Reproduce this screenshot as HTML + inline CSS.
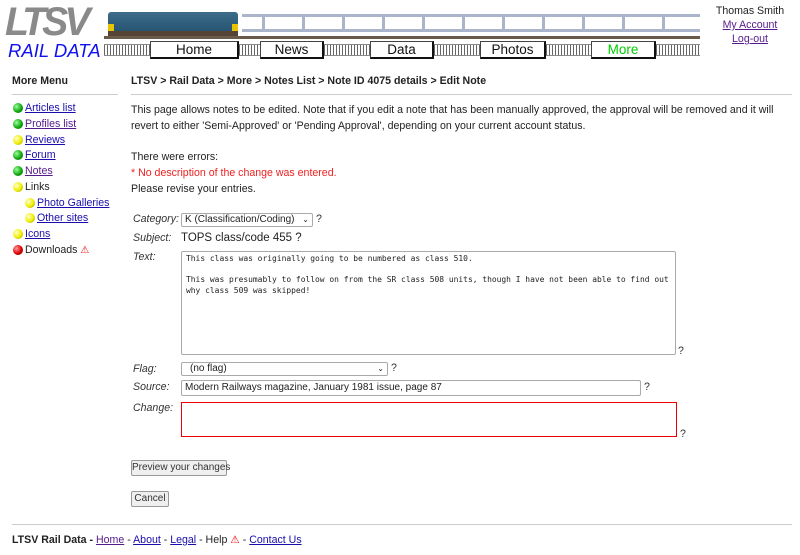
<!DOCTYPE html>
<html><head><meta charset="utf-8"><style>
body{margin:0;width:800px;height:555px;position:relative;font-family:"Liberation Sans",Arial,sans-serif;font-size:10.6px;color:#222;background:#fff;overflow:hidden}
.a{position:absolute;white-space:nowrap}
a{color:#1a0dab;text-decoration:underline}
a.v{color:#551a8b}
.dot{position:absolute;width:10px;height:10px;border-radius:50%;}
.g{background:radial-gradient(circle at 35% 35%,#9f9,#1a1 55%,#050)}
.y{background:radial-gradient(circle at 35% 35%,#ffc,#ee0 55%,#880)}
.r{background:radial-gradient(circle at 35% 35%,#f99,#d00 55%,#600)}
.btn{position:absolute;top:41px;height:15px;background:#fff;border:1px solid #444;border-right:2px solid #111;border-bottom:2px solid #111;font-size:13.5px;text-align:center;line-height:15px;color:#111}
.ties{position:absolute;top:44px;height:10px;background:repeating-linear-gradient(90deg,#666 0 1px,#fff 1px 3px);border-top:1px solid #888;border-bottom:1px solid #888}
.lab{position:absolute;left:133px;font-style:italic;color:#333}
.box{position:absolute;border:1px solid #aaa;border-radius:2px;background:#fff;font-size:10px;line-height:13px;padding-left:3px;box-sizing:border-box;white-space:nowrap}
.q{position:absolute;color:#333}
.bt{position:absolute;background:#efefef;border:1px solid #999;border-radius:2px;font-size:10px;text-align:center;line-height:13px;color:#333;white-space:nowrap}
</style></head><body>
<div class="a" style="left:5px;top:2px;font-size:40px;font-weight:bold;color:#8a8a8a;letter-spacing:-4px;font-style:italic;line-height:40px;transform:scaleX(0.98);transform-origin:left">LTSV</div>
<div class="a" style="left:8px;top:41px;font-size:18.5px;font-style:italic;color:#1111ee;line-height:20px">RAIL DATA</div>
<div class="a" style="left:108px;top:12px;width:130px;height:22px;background:linear-gradient(#3d6d8a,#23506e);border-radius:3px 3px 0 0"></div>
<div class="a" style="left:108px;top:24px;width:6px;height:8px;background:#e8c400"></div>
<div class="a" style="left:232px;top:24px;width:6px;height:8px;background:#e8c400"></div>
<div class="a" style="left:108px;top:31px;width:130px;height:5px;background:#543"></div>
<div class="a" style="left:242px;top:14px;width:458px;height:18px;border-top:3px solid #aab5cc;border-bottom:3px solid #aab5cc;box-sizing:border-box;background:repeating-linear-gradient(90deg,transparent 0 20px,#aab5cc 20px 23px,transparent 23px 40px)"></div>
<div class="a" style="left:104px;top:36px;width:596px;height:3px;background:#6a5a4a"></div>
<div class="ties" style="left:104px;width:46px"></div>
<div class="btn" style="left:150px;width:86px">Home</div>
<div class="ties" style="left:239px;width:21px"></div>
<div class="btn" style="left:260px;width:61px">News</div>
<div class="ties" style="left:324px;width:46px"></div>
<div class="btn" style="left:370px;width:61px">Data</div>
<div class="ties" style="left:434px;width:46px"></div>
<div class="btn" style="left:480px;width:63px">Photos</div>
<div class="ties" style="left:546px;width:45px"></div>
<div class="btn" style="left:591px;width:62px;color:#0c0">More</div>
<div class="ties" style="left:656px;width:44px"></div>
<div class="a" style="left:700px;width:100px;top:4px;text-align:center;line-height:14px">Thomas Smith<br><a class="v">My Account</a><br><a class="v">Log-out</a></div>
<div class="a" style="left:12px;top:75px;font-weight:bold">More Menu</div>
<div class="a" style="left:12px;top:94px;width:106px;border-top:1px solid #ccc"></div>
<div class="a" style="left:131px;top:75px;font-weight:bold">LTSV &gt; Rail Data &gt; More &gt; Notes List &gt; Note ID 4075 details &gt; Edit Note</div>
<div class="a" style="left:131px;top:94px;width:661px;border-top:1px solid #ccc"></div>
<div class="dot g" style="left:13px;top:103px"></div><div class="a" style="left:25px;top:102px"><a>Articles list</a></div>
<div class="dot g" style="left:13px;top:119px"></div><div class="a" style="left:25px;top:118px"><a class="v">Profiles list</a></div>
<div class="dot y" style="left:13px;top:135px"></div><div class="a" style="left:25px;top:134px"><a>Reviews</a></div>
<div class="dot g" style="left:13px;top:150px"></div><div class="a" style="left:25px;top:149px"><a>Forum</a></div>
<div class="dot g" style="left:13px;top:166px"></div><div class="a" style="left:25px;top:165px"><a class="v">Notes</a></div>
<div class="dot y" style="left:13px;top:182px"></div><div class="a" style="left:25px;top:181px">Links</div>
<div class="dot y" style="left:25px;top:198px"></div><div class="a" style="left:37px;top:197px"><a>Photo Galleries</a></div>
<div class="dot y" style="left:25px;top:213px"></div><div class="a" style="left:37px;top:212px"><a>Other sites</a></div>
<div class="dot y" style="left:13px;top:229px"></div><div class="a" style="left:25px;top:228px"><a>Icons</a></div>
<div class="dot r" style="left:13px;top:245px"></div><div class="a" style="left:25px;top:244px">Downloads <span style="color:#e00;font-size:10px">⚠</span></div>
<div class="a" style="left:131px;top:102px;line-height:16px">This page allows notes to be edited. Note that if you edit a note that has been manually approved, the approval will be removed and it will<br>revert to either 'Semi-Approved' or 'Pending Approval', depending on your current account status.</div>
<div class="a" style="left:131px;top:149px;line-height:16px">There were errors:<br><span style="color:#e22">* No description of the change was entered.</span><br>Please revise your entries.</div>
<div class="lab" style="top:213px">Category:</div>
<div class="box" style="left:181px;top:213px;width:132px;height:14px;line-height:12px">K (Classification/Coding)<span style="position:absolute;right:3px;font-size:8px">⌄</span></div>
<div class="q" style="left:316px;top:213px">?</div>
<div class="lab" style="top:232px">Subject:</div>
<div class="a" style="left:181px;top:232px;font-size:11.5px">TOPS class/code 455 ?</div>
<div class="lab" style="top:251px">Text:</div>
<div class="box" style="left:181px;top:251px;width:495px;height:104px;font-family:'DejaVu Sans Mono',monospace;font-size:7.95px;line-height:10.5px;padding:2px 4px;white-space:pre">This class was originally going to be numbered as class 510.

This was presumably to follow on from the SR class 508 units, though I have not been able to find out
why class 509 was skipped!</div>
<div class="q" style="left:678px;top:345px">?</div>
<div class="lab" style="top:363px">Flag:</div>
<div class="box" style="left:181px;top:362px;width:207px;height:14px;line-height:12px;padding-left:8px">(no flag)<span style="position:absolute;right:3px;font-size:8px">⌄</span></div>
<div class="q" style="left:391px;top:362px">?</div>
<div class="lab" style="top:381px">Source:</div>
<div class="box" style="left:181px;top:380px;width:460px;height:16px;line-height:14px">Modern Railways magazine, January 1981 issue, page 87</div>
<div class="q" style="left:644px;top:381px">?</div>
<div class="lab" style="top:402px">Change:</div>
<div class="a" style="left:181px;top:402px;width:496px;height:35px;border:1px solid #e00;box-sizing:border-box"></div>
<div class="q" style="left:680px;top:428px">?</div>
<div class="bt" style="left:131px;top:460px;width:94px;height:14px">Preview your changes</div>
<div class="bt" style="left:131px;top:491px;width:36px;height:14px">Cancel</div>
<div class="a" style="left:12px;top:524px;width:780px;border-top:1px solid #ccc"></div>
<div class="a" style="left:12px;top:534px"><b>LTSV Rail Data -</b> <a class="v">Home</a> - <a>About</a> - <a>Legal</a> - Help <span style="color:#e00">⚠</span> - <a>Contact Us</a></div>
</body></html>
